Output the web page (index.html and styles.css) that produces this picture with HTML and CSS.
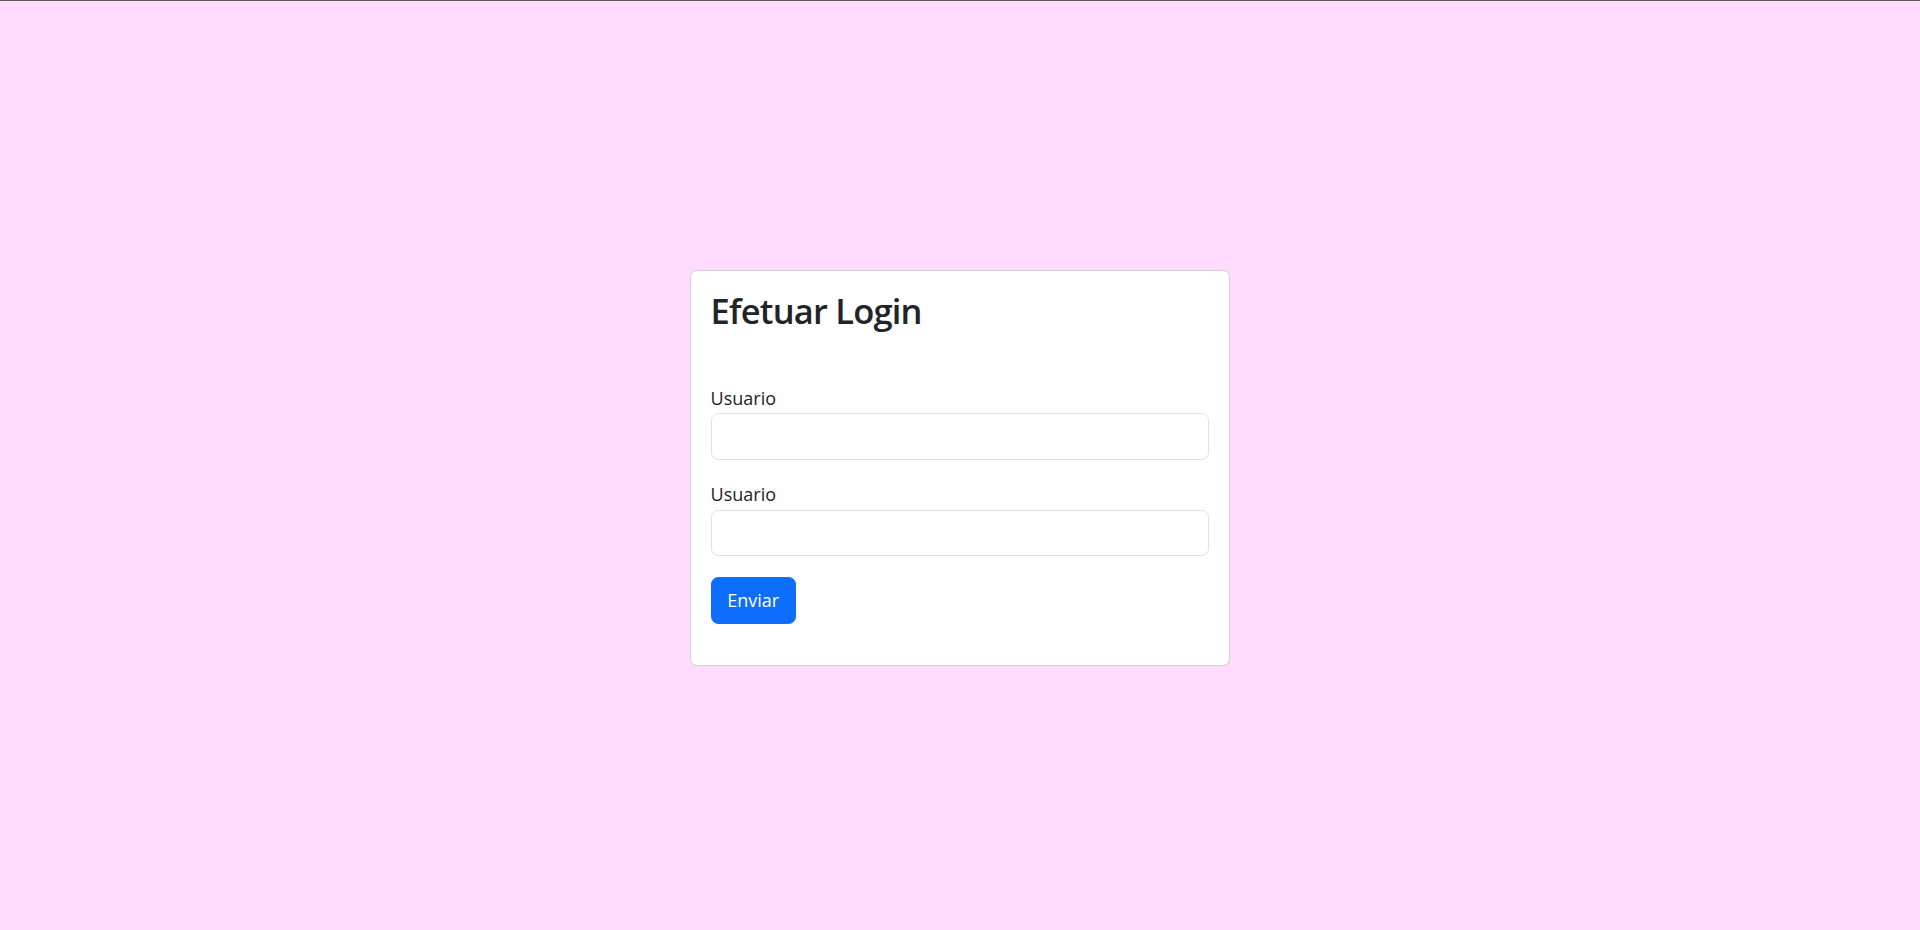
FILE: index.html
```html
<!DOCTYPE html>
<html lang="pt">
<head>
<meta charset="utf-8">
<title>Login</title>
<link rel="stylesheet" href="styles.css">
</head>
<body>
<main class="page">
  <div class="card">
    <form class="card-body">
      <h2 class="title">Efetuar Login</h2>
      <div class="field">
        <label class="label" for="u1">Usuario</label>
        <input class="input" id="u1" type="text">
      </div>
      <div class="field">
        <label class="label" for="u2">Usuario</label>
        <input class="input" id="u2" type="password">
      </div>
      <button class="btn" type="button">Enviar</button>
    </form>
  </div>
</main>
</body>
</html>
```
FILE: styles.css
```css
* { box-sizing: border-box; }
html, body { margin: 0; padding: 0; }
body {
  background: #ffdbfd;
  font-family: "Open Sans", "Noto Sans", sans-serif;
  color: #212529;
  border-top: 1px solid #5c5c5c;
}
.page {
  min-height: 929px;
  display: flex;
  align-items: center;
  justify-content: center;
  padding-top: 4.5px;
}
.card {
  width: 540px;
  background: #fff;
  border: 1px solid rgba(0, 0, 0, 0.175);
  border-radius: 7px;
}
.card-body {
  padding: 19.6px;
  display: flex;
  flex-direction: column;
}
.title {
  margin: 0 0 51.6px 0;
  font-size: 34.5px;
  font-weight: 600;
  line-height: 42px;
  letter-spacing: -0.8px;
}
.field {
  display: flex;
  flex-direction: column;
  margin-bottom: 20.6px;
}
.label {
  font-size: 18px;
  line-height: 29.4px;
}
.input {
  height: 46.5px;
  border: 1px solid #dee2e6;
  border-radius: 7.35px;
  font-family: inherit;
  font-size: 19.6px;
  padding: 7px 14.7px;
  outline: none;
}
.btn {
  align-self: flex-start;
  height: 46.7px;
  width: 85px;
  background: #0d6efd;
  color: #fff;
  border: 1px solid #0d6efd;
  border-radius: 7.35px;
  font-family: inherit;
  font-size: 18px;
  padding: 0 14px;
  margin-bottom: 21.5px;
  cursor: pointer;
}
```
